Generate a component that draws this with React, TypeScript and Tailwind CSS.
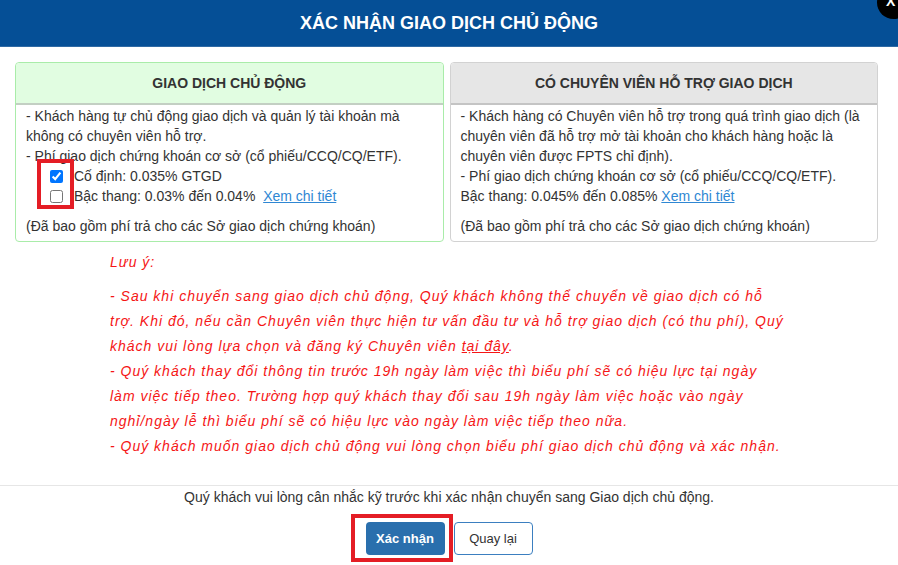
import React from "react";

const font = "font-['Liberation_Sans',Arial,sans-serif]";

const FeeBox = ({
  title,
  tone,
  children,
}: {
  title: string;
  tone: "green" | "grey";
  children: React.ReactNode;
}) => (
  <div
    className={
      tone === "green"
        ? "relative rounded-[4px] border border-[#a9eca9] bg-white"
        : "relative rounded-[4px] border border-[#d2d2d2] bg-white"
    }
  >
    <div
      className={
        tone === "green"
          ? "flex h-[42px] items-center justify-center rounded-t-[4px] border-b-2 border-[#c3cfc3] bg-[#e1fde1] text-[14px] font-bold text-[#333]"
          : "flex h-[42px] items-center justify-center rounded-t-[4px] border-b-2 border-[#c4c4c4] bg-[#e6e6e6] text-[14px] font-bold text-[#333]"
      }
    >
      {title}
    </div>
    <div className="px-[10px] pt-[1px] pb-[5px] text-[14px] leading-[20px] text-[#333]">
      {children}
    </div>
  </div>
);

const Link = ({ children }: { children: React.ReactNode }) => (
  <a href="#" className="text-[#2f87d3] underline">
    {children}
  </a>
);

export default function App() {
  return (
    <div className={`relative h-[565px] w-[898px] overflow-hidden bg-white ${font}`}>
      {/* header */}
      <div className="flex h-[47px] items-center justify-center border-b border-[#2f6aa4] bg-[#054f96]">
        <h1 className="text-[18px] font-bold text-white">XÁC NHẬN GIAO DỊCH CHỦ ĐỘNG</h1>
      </div>
      <div className="absolute right-[-12px] top-[-14px] flex h-[33px] w-[33px] items-end justify-start rounded-full bg-black pb-[11px] pl-[9px] text-[14px] font-bold leading-none text-white">
        X
      </div>

      {/* two plans */}
      <div className="grid grid-cols-2 gap-[6px] pl-[15px] pr-[20px] pt-[15px]">
        <FeeBox title="GIAO DỊCH CHỦ ĐỘNG" tone="green">
          <p>- Khách hàng tự chủ động giao dịch và quản lý tài khoản mà không có chuyên viên hỗ trợ.</p>
          <p>- Phí giao dịch chứng khoán cơ sở (cổ phiếu/CCQ/CQ/ETF).</p>
          <label className="flex items-center pl-[24px]">
            <input type="checkbox" defaultChecked className="m-0 h-[13px] w-[13px]" />
            <span className="ml-[11px]">Cố định: 0.035% GTGD</span>
          </label>
          <label className="flex items-center pl-[24px]">
            <input type="checkbox" className="m-0 h-[13px] w-[13px]" />
            <span className="ml-[11px]">
              Bậc thang: 0.03% đến 0.04%&nbsp;&nbsp;<Link>Xem chi tiết</Link>
            </span>
          </label>
          <p className="mt-[10px]">(Đã bao gồm phí trả cho các Sở giao dịch chứng khoán)</p>
          {/* highlight frame */}
          <div className="absolute left-[21px] top-[96px] h-[50px] w-[37px] border-4 border-[#e41d25]" />
        </FeeBox>
        <FeeBox title="CÓ CHUYÊN VIÊN HỖ TRỢ GIAO DỊCH" tone="grey">
          <p>
            - Khách hàng có Chuyên viên hỗ trợ trong quá trình giao dịch (là chuyên viên đã hỗ trợ mở tài khoản
            cho khách hàng hoặc là chuyên viên được FPTS chỉ định).
          </p>
          <p>- Phí giao dịch chứng khoán cơ sở (cổ phiếu/CCQ/CQ/ETF).</p>
          <p>
            Bậc thang: 0.045% đến 0.085% <Link>Xem chi tiết</Link>
          </p>
          <p className="mt-[10px]">(Đã bao gồm phí trả cho các Sở giao dịch chứng khoán)</p>
        </FeeBox>
      </div>

      {/* notes */}
      <div className="ml-[110px] mt-[8px] w-[674px] text-[14px] italic leading-[25px] tracking-[1px] text-[#f51616]">
        <p className="mb-[9px]">Lưu ý:</p>
        <p>
          - Sau khi chuyển sang giao dịch chủ động, Quý khách không thể chuyển về giao dịch có hỗ trợ. Khi đó,
          nếu cần Chuyên viên thực hiện tư vấn đầu tư và hỗ trợ giao dịch (có thu phí), Quý khách vui lòng lựa
          chọn và đăng ký Chuyên viên <span className="underline">tại đây</span>.
        </p>
        <p>
          - Quý khách thay đổi thông tin trước 19h ngày làm việc thì biểu phí sẽ có hiệu lực tại ngày làm việc
          tiếp theo. Trường hợp quý khách thay đổi sau 19h ngày làm việc hoặc vào ngày nghỉ/ngày lễ thì biểu phí
          sẽ có hiệu lực vào ngày làm việc tiếp theo nữa.
        </p>
        <p>- Quý khách muốn giao dịch chủ động vui lòng chọn biểu phí giao dịch chủ động và xác nhận.</p>
      </div>

      {/* footer */}
      <div className="mt-[26px] border-t border-[#e6e6e6] pt-[1px] text-center">
        <p className="text-[14px] leading-[20px] text-[#333]">
          Quý khách vui lòng cân nhắc kỹ trước khi xác nhận chuyển sang Giao dịch chủ động.
        </p>
        <div className="relative mt-[15px] flex justify-center gap-[9px]">
          <button className="h-[33px] w-[79px] rounded-[4px] bg-[#2a6fad] text-[13px] font-bold text-white">
            Xác nhận
          </button>
          <button className="h-[33px] w-[79px] rounded-[4px] border border-[#3b7fc0] bg-white text-[13px] text-[#333]">
            Quay lại
          </button>
          <div className="absolute left-[351px] top-[-8px] h-[48px] w-[102px] border-4 border-[#e41d25]" />
        </div>
      </div>
    </div>
  );
}
